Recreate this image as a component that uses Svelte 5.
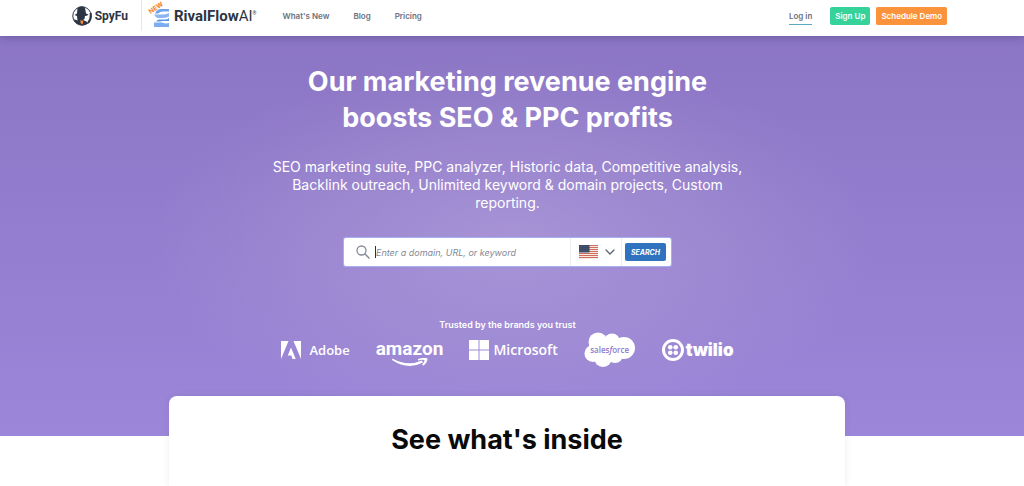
<script>
  const navLinks = ["What's New", "Blog", "Pricing"]
  const countries = ["United States", "United Kingdom", "Canada", "Australia"]

  let query = $state("")
  let country = $state("United States")
</script>

<header>
  <div class="bar">
    <a class="spyfu" href="#home">
      <svg width="20" height="20" viewBox="0 0 40 40" aria-hidden="true">
        <circle cx="20" cy="20" r="18.5" fill="#fff" stroke="#2c3543" stroke-width="2" />
        <path d="M11 4Q19 -1 26 3L28 15L33 17Q30 20 26 20L25 26L22 28L29 31L32 35Q20 42 9 35Q4 31 3 26L11 29L10 20L5 18L10 15Z" fill="#2c3543" />
        <path d="M32 34Q39 27 37 14" fill="none" stroke="#2c3543" stroke-width="4" />
        <path d="M17 28L23 30L21 37L17 34Z" fill="#f58a3c" />
      </svg>
      <span>SpyFu</span>
    </a>
    <a class="rival" href="#rivalflow">
      <svg width="20" height="24" viewBox="0 0 40 48" aria-hidden="true">
        <path d="M20 10H36V15H24Q18 15 14 19H8Q12 10 20 10Z" fill="#6fa3ec" />
        <path d="M6 21H22Q30 21 36 18V25Q30 28 22 28H14Q8 26 6 21Z" fill="#8bb6f2" />
        <path d="M16 31H28Q33 31 36 28V34H22Q14 36 10 34Z" fill="#5d95e6" />
        <path d="M6 37H22Q30 40 36 38V46H6Z" fill="#7badf0" />
        <text x="-1" y="20" transform="rotate(-34 -1 20)">NEW</text>
      </svg>
      <span>RivalFlow<i>AI</i><sup>®</sup></span>
    </a>
    <nav>
      {#each navLinks as link}
        <a href="#nav">{link}</a>
      {/each}
    </nav>
    <div class="account">
      <a class="login" href="#login">Log in</a>
      <a class="btn green" href="#signup">Sign Up</a>
      <a class="btn orange" href="#demo">Schedule Demo</a>
    </div>
  </div>
</header>

<main>
  <section class="hero">
    <h1>Our marketing revenue engine<br />boosts SEO &amp; PPC profits</h1>
    <p class="lead">
      SEO marketing suite, PPC analyzer, Historic data, Competitive analysis,
      Backlink outreach, Unlimited keyword &amp; domain projects, Custom reporting.
    </p>

    <form class="search" onsubmit={(e) => e.preventDefault()}>
      <label class="term">
        <svg width="14" height="14" viewBox="0 0 28 28" aria-label="Domain or keyword">
          <circle cx="11" cy="11" r="9" fill="none" stroke="#858b98" stroke-width="2.6" />
          <path d="M18 18L26 26" stroke="#858b98" stroke-width="3" stroke-linecap="round" />
        </svg>
        <input type="text" bind:value={query} placeholder="Enter a domain, URL, or keyword" />
      </label>
      <div class="country">
        <svg width="19" height="14" viewBox="0 0 38 28" aria-hidden="true">
          <rect width="38" height="28" fill="#f6e9e4" />
          <path d="M0 1H38M0 5H38M0 9H38M0 13H38M0 17H38M0 21H38M0 25H38" stroke="#cf6b5c" stroke-width="2" />
          <rect width="21" height="15" fill="#3c4a66" />
          <path d="M2 3H20M2 7.500H20M2 12H20" stroke="#6d7890" stroke-dasharray="1 2" />
        </svg>
        <svg width="10" height="6" viewBox="0 0 20 12" aria-hidden="true">
          <path d="M2 2L10 10L18 2" fill="none" stroke="#5c6370" stroke-width="2.6" stroke-linecap="round" />
        </svg>
        <select aria-label="Country" bind:value={country}>
          {#each countries as name}
            <option>{name}</option>
          {/each}
        </select>
      </div>
      <button type="submit">SEARCH</button>
    </form>

    <p class="trusted">Trusted by the brands you trust</p>
    <ul class="brands">
      <li class="adobe">
        <svg width="20" height="18" viewBox="0 0 40 36" aria-hidden="true">
          <path d="M0 0H15L0 36ZM25 0H40V36ZM20 13L29.500 36H23L20.500 29H13.500Z" />
        </svg>
        <span>Adobe</span>
      </li>
      <li class="amazon">
        <span>amazon</span>
        <svg width="36" height="9" viewBox="0 0 72 18" aria-hidden="true">
          <path d="M1 1Q30 18 60 5L62 9Q32 25 0 4Z" />
          <path d="M52 2Q65 -2 71 1Q71 9 63 15L60 14Q65 8 65 4Q61 3 52 5Z" />
        </svg>
      </li>
      <li class="microsoft">
        <svg width="20" height="20" viewBox="0 0 40 40" aria-hidden="true">
          <path d="M0 0H19V19H0ZM21 0H40V19H21ZM0 21H19V40H0ZM21 21H40V40H21Z" />
        </svg>
        <span>Microsoft</span>
      </li>
      <li class="salesforce">
        <svg width="52" height="36" viewBox="0 0 104 72" aria-hidden="true">
          <circle cx="28" cy="20" r="19" />
          <circle cx="56" cy="19" r="16" />
          <circle cx="80" cy="32" r="22" />
          <circle cx="18" cy="43" r="17" />
          <circle cx="38" cy="52" r="18" />
          <circle cx="62" cy="46" r="16" />
          <path d="M20 20H80V48H20Z" />
        </svg>
        <span>sales<i>f</i>orce</span>
      </li>
      <li class="twilio">
        <svg width="22" height="22" viewBox="0 0 44 44" aria-hidden="true">
          <path fill-rule="evenodd" d="M22 0A22 22 0 1 1 22 44A22 22 0 1 1 22 0ZM22 6A16 16 0 1 0 22 38A16 16 0 1 0 22 6Z" />
          <circle cx="16.500" cy="16.500" r="4.700" />
          <circle cx="27.500" cy="16.500" r="4.700" />
          <circle cx="16.500" cy="27.500" r="4.700" />
          <circle cx="27.500" cy="27.500" r="4.700" />
        </svg>
        <span>twilio</span>
      </li>
    </ul>
  </section>

  <section class="inside">
    <h2>See what's inside</h2>
  </section>
</main>

<style>
  :global(body) {
    background: #fff;
    font-family: Inter, "Liberation Sans", sans-serif;
  }
  a {
    color: inherit;
    text-decoration: none;
  }

  header {
    position: relative;
    z-index: 1;
    background: #fff;
    box-shadow: 0 1px 8px rgba(50, 40, 90, 0.35);
  }
  .bar {
    display: flex;
    align-items: center;
    box-sizing: border-box;
    height: 36px;
    padding: 0 7.5% 5px 7%;
    color: #6a7080;
    font-size: 8px;
    font-weight: 600;
    white-space: nowrap;
  }
  .spyfu,
  .rival {
    display: flex;
    align-items: center;
    gap: 3px;
    color: #2c3543;
    font-family: Roboto, sans-serif;
    font-weight: 700;
  }
  .spyfu {
    height: 31px;
    padding-right: 13px;
    border-right: 1px solid #e4e6ea;
    font-size: 12px;
  }
  .rival {
    padding-left: 9px;
    font-size: 15px;
  }
  .rival svg {
    overflow: visible;
  }
  .rival text {
    fill: #f58a3c;
    font: 800 13px Inter, sans-serif;
  }
  .rival i {
    font-style: normal;
    font-weight: 400;
  }
  .rival sup {
    font-size: 5px;
    line-height: 1;
    vertical-align: 6px;
  }
  nav {
    display: flex;
    gap: 24px;
    margin-left: 26px;
  }
  .account {
    display: flex;
    align-items: center;
    gap: 6px;
    margin-left: auto;
  }
  .login {
    margin-right: 12px;
    padding: 4px 0 3px;
    border-bottom: 1px solid #5aa9c4;
  }
  .btn {
    padding: 0 5px;
    border-radius: 2px;
    color: #fff;
    line-height: 18px;
  }
  .green {
    background: #35d399;
  }
  .orange {
    background: #fb923c;
  }

  .hero {
    box-sizing: border-box;
    min-height: 400px;
    padding: 28px 9px 0 0;
    background:
      radial-gradient(ellipse 360px 190px at 50% 52%, rgba(180, 162, 217, 0.6), rgba(180, 162, 217, 0)),
      linear-gradient(#8b75c4, #9c86d9);
    color: #fff;
    text-align: center;
  }
  h1,
  h2 {
    margin: 0;
    font-size: 27px;
    font-weight: 700;
    line-height: 36px;
  }
  .lead {
    max-width: 470px;
    margin: 22px auto 0;
    font-size: 14px;
    font-weight: 400;
    line-height: 18px;
  }
  .search {
    display: flex;
    align-items: center;
    box-sizing: border-box;
    width: 327px;
    height: 28px;
    margin: 26px auto 0;
    padding-right: 5px;
    border-radius: 2px;
    background: #fff;
    box-shadow: 0 0 0 1px #a5b0ef;
  }
  .term {
    display: flex;
    flex: 1;
    align-items: center;
    gap: 5px;
    padding-left: 12px;
  }
  input {
    flex: 1;
    min-width: 0;
    height: 12px;
    padding: 0;
    border: 0;
    border-left: 1px solid #333;
    outline: 0;
    background: none;
    color: #333;
    font: italic 400 9px Inter, sans-serif;
  }
  input::placeholder {
    color: #858a95;
  }
  .country {
    position: relative;
    display: flex;
    align-items: center;
    gap: 7px;
    height: 28px;
    margin-right: 3px;
    padding: 0 6px 0 8px;
    border: solid #eee;
    border-width: 0 1px;
  }
  select {
    position: absolute;
    inset: 0;
    width: 100%;
    opacity: 0;
    cursor: pointer;
  }
  button {
    height: 18px;
    padding: 0 6px;
    border: 0;
    border-radius: 2px;
    background: #2f72bd;
    color: #fff;
    font: italic 700 7px Inter, sans-serif;
    cursor: pointer;
  }
  .trusted {
    margin: 52px 0 0;
    font-size: 9px;
    font-weight: 600;
    line-height: 14px;
  }
  .brands {
    display: flex;
    justify-content: center;
    align-items: center;
    gap: 26px;
    height: 36px;
    margin: 0;
    padding: 0;
    list-style: none;
    font-family: "Open Sans", sans-serif;
    font-weight: 600;
    line-height: 18px;
  }
  .brands li {
    display: flex;
    align-items: center;
  }
  .brands svg {
    fill: #fff;
  }
  .adobe {
    gap: 8px;
    font-size: 13px;
  }
  .brands .amazon {
    flex-direction: column;
    padding-top: 6px;
    font-family: Roboto, sans-serif;
    font-size: 19px;
    font-weight: 700;
  }
  .microsoft {
    gap: 4px;
    font-size: 14px;
  }
  .salesforce {
    position: relative;
    justify-content: center;
    color: #8f7acb;
    font-size: 8px;
  }
  .salesforce span {
    position: absolute;
    line-height: 22px;
  }
  .twilio {
    gap: 2px;
    font-family: Inter, sans-serif;
    font-size: 17px;
    font-weight: 900;
  }

  main {
    overflow: hidden;
  }
  .inside {
    box-sizing: border-box;
    width: calc((100% - 9px) * 2 / 3);
    margin: -40px auto 0;
    padding: 26px 0 28px;
    position: relative;
    right: 5px;
    border-radius: 8px 8px 0 0;
    background: #fff;
    box-shadow: 0 0 6px rgba(60, 50, 100, 0.1);
    color: #0a0a0a;
    text-align: center;
  }
</style>
